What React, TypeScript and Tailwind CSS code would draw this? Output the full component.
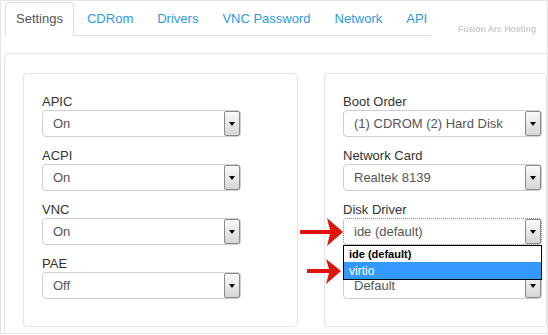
import React from 'react';

const tabs = ['Settings', 'CDRom', 'Drivers', 'VNC Password', 'Network', 'API'];

const leftFields = [
  { label: 'APIC', value: 'On' },
  { label: 'ACPI', value: 'On' },
  { label: 'VNC', value: 'On' },
  { label: 'PAE', value: 'Off' },
];

function Select({ value, focused = false, children }: { value: string; focused?: boolean; children?: React.ReactNode }) {
  return (
    <div
      className={`relative flex h-[27px] w-[199px] items-center rounded-[4px] border bg-white ${
        focused ? 'border-dotted border-[#8c8c8c]' : 'border-[#cfcfcf]'
      }`}
    >
      <span className="flex-1 pl-[10px] text-[13px] leading-[16px] text-[#555]">{value}</span>
      <span className="flex h-[25px] w-[16px] items-center justify-center rounded-[2px] border border-[#8a8a8a] bg-linear-to-b from-[#fafafa] to-[#d6d6d6]">
        <span className="h-0 w-0 border-x-[3px] border-t-[4px] border-x-transparent border-t-black" />
      </span>
      {children}
    </div>
  );
}

function Field({ label, children }: { label: string; children: React.ReactNode }) {
  return (
    <div className="mb-[11px]">
      <div className="h-[16px] text-[13px] leading-[16px] text-[#333]">{label}</div>
      {children}
    </div>
  );
}

export default function App() {
  return (
    <div className="h-[335px] w-[548px] overflow-hidden bg-white font-['Liberation_Sans',Arial,sans-serif]">
      <div className="relative flex h-[334px] flex-col overflow-hidden border border-[#e6e6e6]">
        {/* Tabs */}
        <ul className="ml-[4px] mt-[1px] flex h-[34px] w-[426px] border-b border-[#ddd]">
          {tabs.map((t, i) => (
            <li
              key={t}
              className={`-mb-px mr-[2px] flex h-[34px] shrink-0 items-center whitespace-nowrap rounded-t-[4px] border px-[10px] text-[13px] ${
                i === 0 ? 'border-[#ddd] border-b-transparent bg-white text-[#555]' : 'border-transparent text-[#2d9be0]'
              }`}
            >
              {t}
            </li>
          ))}
        </ul>

        {/* watermark */}
        <span className="absolute left-[457px] top-[22px] text-[8.5px] font-bold text-[#cbcbcb] blur-[0.3px]">
          Fusion Arc Hosting
        </span>

        {/* Tab content */}
        <div className="ml-[3px] mt-[17px] flex h-[320px] w-[620px] shrink-0 gap-[26px] rounded-[4px] border border-[#e3e3e3] pl-[18px] pt-[19px]">
          <div className="h-[254px] w-[275px] shrink-0 rounded-[4px] border border-[#e3e3e3] pl-[18px] pt-[20px]">
            {leftFields.map((f) => (
              <Field key={f.label} label={f.label}>
                <Select value={f.value} />
              </Field>
            ))}
          </div>

          <div className="h-[254px] w-[223px] shrink-0 rounded-[4px] border border-[#e3e3e3] pl-[18px] pt-[20px]">
            <Field label="Boot Order">
              <Select value="(1) CDROM (2) Hard Disk" />
            </Field>
            <Field label="Network Card">
              <Select value="Realtek 8139" />
            </Field>
            <Field label="Disk Driver">
              <Select value="ide (default)" focused>
                <div className="absolute left-[-1px] top-[26px] z-10 w-[199px] border border-black bg-white">
                  <div className="flex h-[16px] items-center pl-[5px] text-[11px] font-bold text-black">ide (default)</div>
                  <div className="flex h-[17px] items-center bg-[#3399ff] pl-[5px] text-[12px] text-white">virtio</div>
                </div>
              </Select>
            </Field>
            {/* label of this field is hidden behind the open list */}
            <Field label="">
              <Select value="Default" />
            </Field>
          </div>
        </div>

        {/* red arrows */}
        <svg className="absolute left-[297px] top-[213px] z-20" width="48" height="78" viewBox="0 0 48 78">
          <path d="M2 16 L32 16 L29 4 L45 18 L29 32 L32 20 L2 20 Z" fill="#e0140d" />
          <path d="M9 55 L31 55 L28 45 L43 57 L28 70 L31 59 L9 59 Z" fill="#e0140d" />
        </svg>
      </div>
    </div>
  );
}
